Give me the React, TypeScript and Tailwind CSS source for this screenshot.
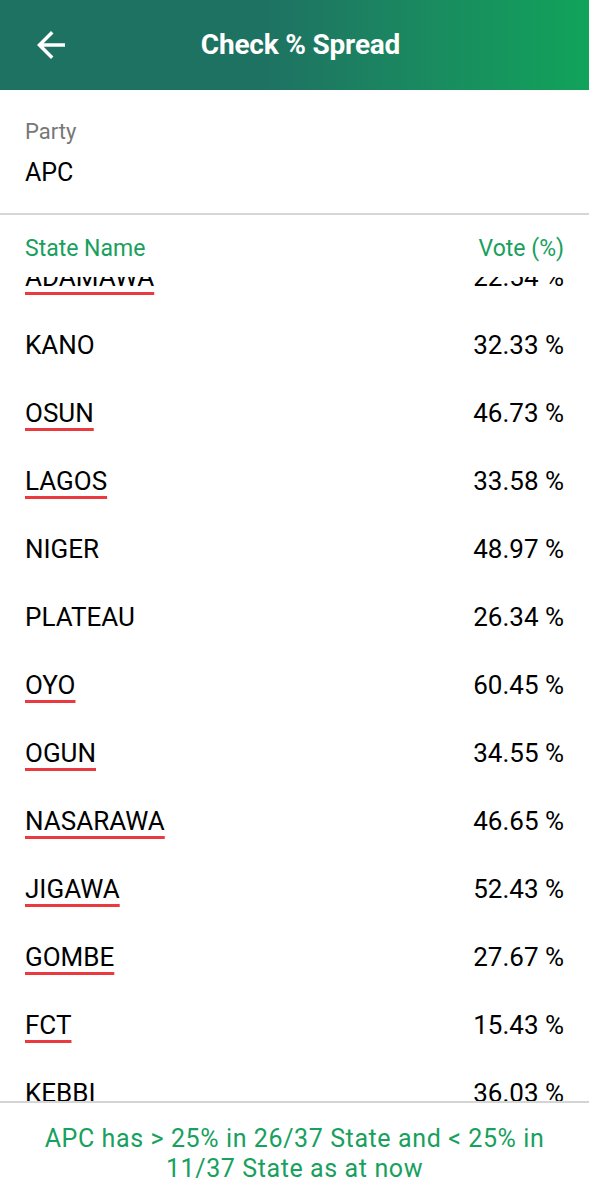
const ROWS: { name: string; vote: string; flagged: boolean }[] = [
  { name: "ADAMAWA", vote: "22.54 %", flagged: true },
  { name: "KANO", vote: "32.33 %", flagged: false },
  { name: "OSUN", vote: "46.73 %", flagged: true },
  { name: "LAGOS", vote: "33.58 %", flagged: true },
  { name: "NIGER", vote: "48.97 %", flagged: false },
  { name: "PLATEAU", vote: "26.34 %", flagged: false },
  { name: "OYO", vote: "60.45 %", flagged: true },
  { name: "OGUN", vote: "34.55 %", flagged: true },
  { name: "NASARAWA", vote: "46.65 %", flagged: true },
  { name: "JIGAWA", vote: "52.43 %", flagged: true },
  { name: "GOMBE", vote: "27.67 %", flagged: true },
  { name: "FCT", vote: "15.43 %", flagged: true },
  { name: "KEBBI", vote: "36.03 %", flagged: false },
  { name: "KWARA", vote: "43.12 %", flagged: true },
];

export default function App() {
  return (
    <div
      className="flex h-[1200px] w-full flex-col overflow-hidden bg-white"
      style={{ fontFamily: "Roboto, 'Noto Sans', sans-serif" }}
    >
      <header className="relative flex h-[90px] shrink-0 items-center justify-center bg-gradient-to-r from-[#1e7262] from-45% to-[#10a35a] pl-[12px]">
        <button type="button" className="absolute left-[30px] top-[24px] text-white" aria-label="Back">
          <svg width="42" height="42" viewBox="0 0 24 24" fill="currentColor">
            <path d="M20 11H7.83l5.59-5.59L12 4l-8 8 8 8 1.41-1.41L7.83 13H20v-2z" />
          </svg>
        </button>
        <h1 className="text-[28px] font-bold tracking-[-0.2px] text-white">Check % Spread</h1>
      </header>

      <section className="shrink-0 border-b-2 border-[#d6d6d6] px-[25px] pt-[28px] pb-[26px]">
        <div className="text-[22px] leading-[28px] text-[#777777]">Party</div>
        <div className="mt-[13px] text-[25px] leading-[28px] text-black">APC</div>
      </section>

      <div className="flex shrink-0 items-center justify-between px-[25px] pt-[20px] pb-[14px] text-[23px] leading-[28px] text-[#17a05e]">
        <span>State Name</span>
        <span>Vote (%)</span>
      </div>

      <div className="min-h-0 flex-1 overflow-hidden">
        <ul className="-mt-[34px]">
          {ROWS.map((row) => (
            <li
              key={row.name}
              className="flex h-[68px] items-center justify-between px-[25px] text-[26px] text-black"
            >
              <span
                className={
                  row.flagged
                    ? "underline decoration-[#ea3a3f] decoration-[3px] underline-offset-[6px]"
                    : ""
                }
              >
                {row.name}
              </span>
              <span>{row.vote}</span>
            </li>
          ))}
        </ul>
      </div>

      <footer className="flex h-[99px] shrink-0 items-start justify-center border-t-2 border-[#d4d4d4] px-[20px] pt-[21px] text-center text-[25px] leading-[30px] tracking-[0.6px] text-[#17a05e]">
        <p className="whitespace-nowrap">
          APC has &gt; 25% in 26/37 State and &lt; 25% in
          <br />
          11/37 State as at now
        </p>
      </footer>
    </div>
  );
}
